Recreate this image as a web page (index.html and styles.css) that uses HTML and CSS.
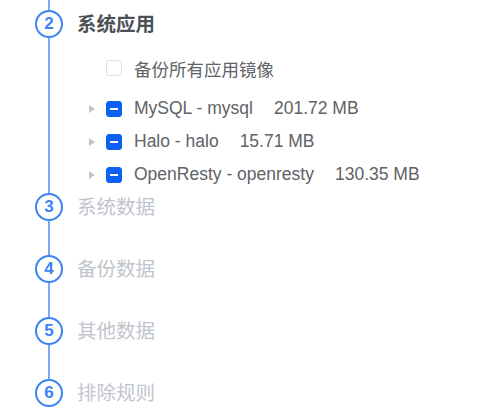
FILE: index.html
```html
<!DOCTYPE html>
<html>
<head lang="zh">
    <meta charset="UTF-8">
    <title>备份步骤</title>
    <link rel="stylesheet" href="styles.css">
</head>
<body>
<div class="steps">
    <div class="step active">
        <div class="head">
            <i class="line top"></i>
            <span class="num">2</span>
            <i class="line"></i>
        </div>
        <div class="main">
            <div class="title">系统应用</div>
            <label class="check-all"><em class="box"></em><span>备份所有应用镜像</span></label>
            <ul class="tree">
                <li><b class="arrow"></b><em class="box on"></em><span>MySQL - mysql</span><span class="size">201.72 MB</span></li>
                <li><b class="arrow"></b><em class="box on"></em><span>Halo - halo</span><span class="size">15.71 MB</span></li>
                <li><b class="arrow"></b><em class="box on"></em><span>OpenResty - openresty</span><span class="size">130.35 MB</span></li>
            </ul>
        </div>
    </div>
    <div class="step">
        <div class="head"><span class="num">3</span><i class="line"></i></div>
        <div class="main"><div class="title">系统数据</div></div>
    </div>
    <div class="step">
        <div class="head"><span class="num">4</span><i class="line"></i></div>
        <div class="main"><div class="title">备份数据</div></div>
    </div>
    <div class="step">
        <div class="head"><span class="num">5</span><i class="line"></i></div>
        <div class="main"><div class="title">其他数据</div></div>
    </div>
    <div class="step last">
        <div class="head"><span class="num">6</span></div>
        <div class="main"><div class="title">排除规则</div></div>
    </div>
</div>
</body>
</html>
```

FILE: styles.css
```css
body, div, ul, li, span, em, b, i, label {
    margin: 0;
    padding: 0;
    font-family: "Liberation Sans", "Noto Sans CJK SC", Arial, sans-serif;
}

body {
    background: #fff;
}

ul, li {
    list-style: none;
}

.steps {
    display: flex;
    flex-direction: column;
    padding-left: 35px;
}

.step {
    display: flex;
    height: 62px;
}

.step.active {
    height: 193px;
}

.step.last {
    height: auto;
}

.head {
    display: flex;
    flex-direction: column;
    align-items: center;
    width: 28px;
    flex-shrink: 0;
}

.num {
    display: flex;
    align-items: center;
    justify-content: center;
    box-sizing: border-box;
    width: 28px;
    height: 28px;
    border: 2px solid #3d84f2;
    border-radius: 50%;
    color: #3d84f2;
    font-size: 17px;
    font-weight: bold;
}

.line {
    display: block;
    flex: 1;
    width: 2px;
    background: #7aaaf4;
}

.line.top {
    flex: none;
    height: 10px;
}

.main {
    margin-left: 14px;
}

.active .main {
    padding-top: 10px;
}

.title {
    height: 28px;
    line-height: 28px;
    font-size: 19.5px;
    color: #c0c4cc;
}

.active .title {
    color: #4d5057;
    font-weight: bold;
}

.box {
    display: block;
    box-sizing: border-box;
    position: relative;
    width: 16px;
    height: 16px;
    border: 1px solid #dcdfe6;
    border-radius: 3px;
    background: #fff;
    flex-shrink: 0;
}

.box.on {
    border-color: #0b62f2;
    background: #0b62f2;
}

.box.on::after {
    content: "";
    position: absolute;
    left: 3px;
    top: 6px;
    width: 8px;
    height: 2px;
    background: #fff;
}

.check-all {
    display: flex;
    align-items: center;
    height: 16px;
    margin: 22px 0 16px 29px;
    font-size: 17.5px;
    color: #606266;
}

.check-all span {
    margin-left: 12px;
}

.tree li {
    display: flex;
    align-items: center;
    height: 33px;
    padding-left: 7px;
    font-size: 17.5px;
    color: #606266;
}

.arrow {
    display: flex;
    align-items: center;
    justify-content: center;
    width: 18px;
    height: 18px;
}

.arrow::before {
    content: "";
    border-left: 6px solid #c0c4cc;
    border-top: 4px solid transparent;
    border-bottom: 4px solid transparent;
    margin-left: -2px;
}

.tree .box {
    margin-left: 4px;
}

.tree .box + span {
    margin-left: 12px;
}

.tree .size {
    margin-left: 21px;
}
```
